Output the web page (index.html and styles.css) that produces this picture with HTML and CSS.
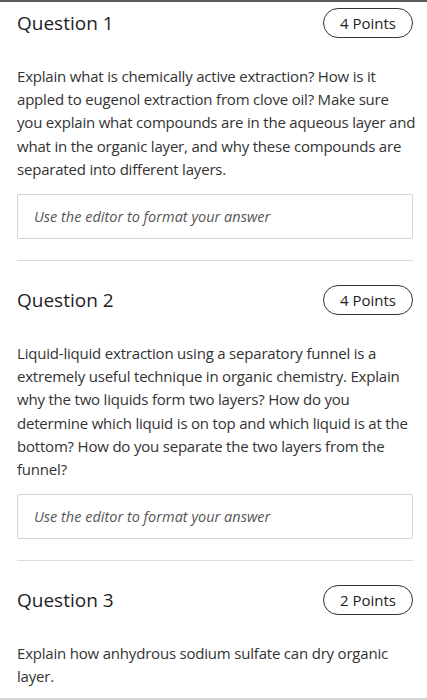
FILE: index.html
```html
<!DOCTYPE html>
<html lang="en">
<head>
    <meta charset="UTF-8">
    <meta name="viewport" content="width=device-width, initial-scale=1.0">
    <title>Quiz</title>
    <link rel="stylesheet" href="styles.css">
</head>
<body>
    <div class="quiz">
        <section class="question first">
            <div class="question-head">
                <h2>Question 1</h2>
                <span class="points">4 Points</span>
            </div>
            <p class="prompt">Explain what is chemically active extraction? How is it<br>
                appled to eugenol extraction from clove oil? Make sure<br>
                you explain what compounds are in the aqueous layer and<br>
                what in the organic layer, and why these compounds are<br>
                separated into different layers.</p>
            <div class="answer">Use the editor to format your answer</div>
        </section>

        <section class="question">
            <div class="question-head">
                <h2>Question 2</h2>
                <span class="points">4 Points</span>
            </div>
            <p class="prompt">Liquid-liquid extraction using a separatory funnel is a<br>
                extremely useful technique in organic chemistry. Explain<br>
                why the two liquids form two layers? How do you<br>
                determine which liquid is on top and which liquid is at the<br>
                bottom? How do you separate the two layers from the<br>
                funnel?</p>
            <div class="answer">Use the editor to format your answer</div>
        </section>

        <section class="question">
            <div class="question-head">
                <h2>Question 3</h2>
                <span class="points">2 Points</span>
            </div>
            <p class="prompt">Explain how anhydrous sodium sulfate can dry organic<br>
                layer.</p>
        </section>
    </div>
</body>
</html>
```

FILE: styles.css
```css
body {
  margin: 0;
  font-family: 'Open Sans', sans-serif;
  background: #fff;
  color: #2d2d2d;
}

.quiz {
  height: 696px;
  overflow: hidden;
  border-top: 2px solid #5a5a5a;
  border-bottom: 2px solid #d6d6d6;
  padding: 0 14px 0 17px;
}

.question {
  padding-top: 24px;
}

.question.first {
  padding-top: 6px;
}

.question + .question {
  border-top: 1px solid #dcdcdc;
}

.question-head {
  display: flex;
  justify-content: space-between;
  align-items: center;
  height: 30px;
}

h2 {
  margin: 0;
  font-size: 19px;
  font-weight: 500;
  color: #1e1e1e;
}

.points {
  box-sizing: border-box;
  width: 90px;
  height: 30px;
  border: 1px solid #333;
  border-radius: 15px;
  display: flex;
  align-items: center;
  justify-content: center;
  font-size: 15px;
  font-weight: 500;
  color: #222;
}

.prompt {
  margin: 27px 0 0;
  font-size: 15px;
  letter-spacing: -0.2px;
  line-height: 23.2px;
  color: #333;
  white-space: nowrap;
}

.answer {
  margin: 13px 0 21px;
  box-sizing: border-box;
  height: 45px;
  border: 1px solid #d4d4d4;
  border-radius: 2px;
  padding: 0 16px;
  display: flex;
  align-items: center;
  font-size: 14.5px;
  font-style: italic;
  color: #555;
}
```
